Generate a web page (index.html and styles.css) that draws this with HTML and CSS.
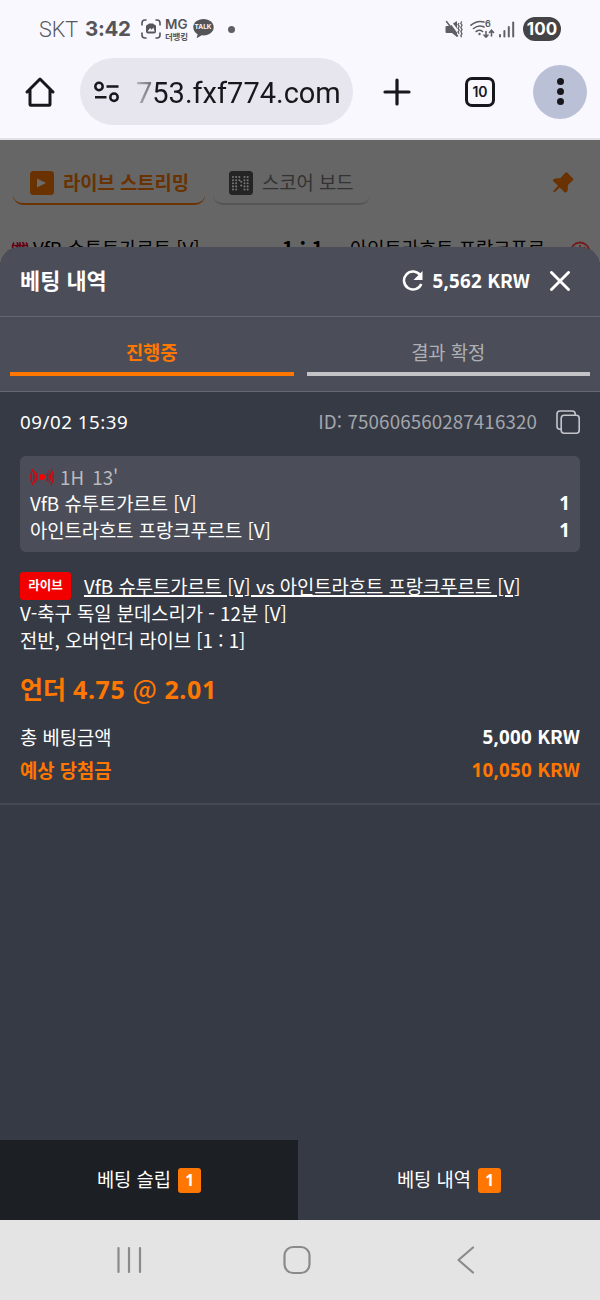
FILE: index.html
```html
<!DOCTYPE html>
<html lang="ko">
<head>
<meta charset="utf-8">
<title>베팅 내역</title>
<link rel="stylesheet" href="styles.css">
</head>
<body>
<div class="screen">
  <header class="browser">
    <div class="status">
      <span class="carrier">SKT</span>
      <span class="clock">3:42</span>
      <svg class="capture" width="20" height="20" viewBox="0 0 20 20" fill="none" stroke="#555558" stroke-width="1.6" stroke-linecap="round"><path d="M1 6V4a3 3 0 0 1 3-3h1M15 1h1a3 3 0 0 1 3 3v2M19 14v2a3 3 0 0 1-3 3h-1M5 19H4a3 3 0 0 1-3-3v-2"/><path d="M5 7.500q0-2 2-2l1-1h4l1 1q2 0 2 2v5q0 2-2 2H7q-2 0-2-2z" fill="#555558" stroke="none"/><path d="M6.500 12.500l2.600-3.400 1.600 1.600 1.600-2.200 1.400 4z" fill="#f9f8ff" stroke="none"/></svg>
      <span class="mg"><b>MG</b><small>더뱅킹</small></span>
      <span class="talk"><svg width="21" height="20" viewBox="0 0 21 20"><path fill="#555558" d="M10.500 0C4.600 0 .3 3.600.3 8.200c0 3 1.700 5.500 4.300 7L3.700 19.300l5-3c.6.1 1.200.1 1.800.1 5.900 0 10.200-3.600 10.200-8.200S16.400 0 10.500 0z"/></svg><i>TALK</i></span>
      <span class="more-dot"></span>
      <span class="spacer"></span>
      <svg class="mute" width="18" height="18" viewBox="0 0 18 18"><path fill="#5e5e63" d="M.5 7q0-1 1-1H5l1.500-1 5.500 7.500V17l-5-4H1.500q-1 0-1-1zM8 3.500L12 1v7.500z"/><path d="M1.500 1.500L12.500 16" stroke="#5e5e63" stroke-width="1.500" stroke-linecap="round"/><path d="M14 3l-1 1.500 1.200 1.800L13 8.200l1.200 1.900L13 12l1.200 1.800M16.800 1.500l-1 1.800 1.200 2-1.200 2.100 1.200 2.100-1.200 2.100 1.200 2.100-1.200 2 .8 1.500" fill="none" stroke="#5e5e63" stroke-width="1.300"/></svg>
      <span class="wifi"><svg width="25" height="18" viewBox="0 0 25 18" fill="none" stroke="#5e5e63" stroke-width="1.600" stroke-linecap="round"><path d="M1 5.200Q7 0 14 2M3.500 8.500Q8.500 4.500 14 7M6.200 11.500Q9.500 9 12.600 11.500"/><circle cx="9.500" cy="14" r="1.200" fill="#5e5e63" stroke="none"/><path d="M16 11.500V17M14 15l2 2.200L18 15M21.500 16v-5.500M19.500 12.500l2-2.200 2 2.200"/></svg><i>6</i></span>
      <svg class="signal" width="16" height="17" viewBox="0 0 16 17" fill="#626266"><rect x="0" y="13" width="2" height="3.500" rx="1"/><rect x="4.400" y="9" width="2" height="7.500" rx="1"/><rect x="8.800" y="5" width="2" height="11.500" rx="1"/><rect x="13.200" y="0.500" width="2" height="16" rx="1"/></svg>
      <span class="battery">100</span>
    </div>
    <div class="toolbar">
      <svg class="home" width="32" height="32" viewBox="0 0 32 32" fill="none" stroke="#17171c" stroke-width="3" stroke-linejoin="round" stroke-linecap="round"><path d="M3 16L16 3l13 13M6 14v14.500q0 .8.800.8h18.400q.8 0 .8-.8V14"/></svg>
      <div class="address">
        <svg width="26" height="22" viewBox="0 0 26 22" fill="none" stroke="#17171c" stroke-width="2.500"><circle cx="6" cy="5.500" r="3.700"/><path d="M13.500 5.500h12M2 16.200h11.500"/><circle cx="21" cy="16.200" r="3.700"/></svg>
        <span class="url">753.fxf774.com</span>
      </div>
      <svg class="plus" width="28" height="28" viewBox="0 0 28 28" stroke="#17171c" stroke-width="3.200" stroke-linecap="round"><path d="M14 2v24M2 14h24"/></svg>
      <span class="tabcount">10</span>
      <span class="menu"><i></i><i></i><i></i></span>
    </div>
  </header>

  <section class="page">
    <div class="modes">
      <div class="mode on">
        <svg width="24" height="24" viewBox="0 0 24 24"><rect width="24" height="24" rx="3.500" fill="#693200"/><path d="M7 7.500l9 4.500-9 4.500z" fill="#6b6b6b"/></svg>
        <span>라이브 스트리밍</span>
      </div>
      <div class="mode">
        <svg width="24" height="24" viewBox="0 0 24 24"><rect width="24" height="24" rx="3.500" fill="#242424"/><g stroke="#747474" stroke-width="2.100" stroke-linecap="round" stroke-dasharray="0 3.170"><path d="M4 6h7M15.500 6H21M4 9.200h7M15.500 9.200H21M4 12.300h5M12.200 10.800h.1M15.500 12.300H21M4 15.400h5M12.200 14.500h.1M15.500 15.400H21M4 18.500h5M15.500 18.500H21"/></g></svg>
        <span>스코어 보드</span>
      </div>
      <svg class="pin" width="22" height="22" viewBox="0 0 22 22"><path fill="#693200" d="M13.500.5q1-.7 1.900.2l5.500 5.700q.8.900 0 1.900l-5 4.600-.2 5q-.1 1.500-1.400 2.300-1 .7-1.900-.2l-4.600-4.500-5 4.600H1.500v-1.300l4.600-5L1.300 9.300q-.8-.9 0-1.700 1-.9 2.400-1l4.800-.6z"/></svg>
    </div>
    <div class="match">
      <svg class="badge" width="18" height="16" viewBox="0 0 18 16"><path d="M3 1.500Q0 5 3 10M15 1.500q3 3.500 0 8.500M5.500 1.500q3 1 0 3.500 3 2 0 4M11 1.500q3.500 1 .5 3.500 3 2 0 4M9 1v7M1 4.500h16" fill="none" stroke="#650014" stroke-width="1.600"/></svg>
      <span class="home-team">VfB 슈투트가르트 [V]</span>
      <span class="score">1 : 1</span>
      <span class="away-team">아인트라흐트 프랑크푸르</span>
      <svg class="timer" width="22" height="22" viewBox="0 0 22 22" fill="none" stroke="#751c1c" stroke-width="1.800"><circle cx="11" cy="11" r="9.500"/><path d="M11 4v7M7 6l-2 3M15 6l2 3"/></svg>
    </div>
  </section>

  <main class="sheet">
    <div class="sheet-head">
      <h1>베팅 내역</h1>
      <svg class="refresh" width="22" height="22" viewBox="0 0 22 22"><path d="M18.300 5.200A9 9 0 1 0 19.300 14" fill="none" stroke="#fff" stroke-width="2.500"/><path d="M20.500 1v9h-9z" fill="#fff"/></svg>
      <span class="balance amount">5,562 <span>KRW</span></span>
      <svg class="close" width="20" height="20" viewBox="0 0 20 20" stroke="#fff" stroke-width="2.900" stroke-linecap="round"><path d="M1.500 1.500l17 17M18.500 1.500l-17 17"/></svg>
    </div>
    <nav class="tabs">
      <div class="tab on">진행중</div>
      <div class="tab">결과 확정</div>
    </nav>
    <article class="bet">
      <div class="meta">
        <time>09/02 15:39</time>
        <span class="bet-id">ID: 750606560287416320</span>
        <svg class="copy" width="24" height="24" viewBox="0 0 24 24" fill="none" stroke="#c5c6ca" stroke-width="1.600"><path d="M5 19.200H4Q1 19.200 1 16.200V4q0-3 3-3h12.200q3 0 3 3v1"/><rect x="5.200" y="5.200" width="18" height="18" rx="3"/></svg>
      </div>
      <div class="card">
        <div class="period"><svg width="24" height="18" viewBox="0 0 24 18" fill="none" stroke="#d0000a" stroke-width="1.300"><circle cx="12" cy="9" r="3" fill="#ff0000" stroke="none"/><path d="M3 1Q-1.500 9 3 17M5.200 3Q2 9 5.200 15M7.200 5Q5 9 7.200 13M21 1q4.500 8 0 16M18.800 3q3.200 6 0 12M16.800 5q2.200 4 0 8"/></svg><span>1H 13'</span></div>
        <div class="team"><span>VfB 슈투트가르트 [V]</span><b>1</b></div>
        <div class="team"><span>아인트라흐트 프랑크푸르트 [V]</span><b>1</b></div>
      </div>
      <div class="fixture"><span class="live">라이브</span><a>VfB 슈투트가르트 [V] vs 아인트라흐트 프랑크푸르트 [V]</a></div>
      <div class="line">V-축구 독일 분데스리가 - 12분 [V]</div>
      <div class="line">전반, 오버언더 라이브 [1 : 1]</div>
      <div class="pick">언더 <span class="latin">4.75 <span class="at">@</span> 2.01</span></div>
      <div class="sum stake"><span>총 베팅금액</span><b class="amount">5,000 <span>KRW</span></b></div>
      <div class="sum payout"><span>예상 당첨금</span><b class="amount">10,050 <span>KRW</span></b></div>
    </article>
  </main>

  <nav class="dock">
    <div class="dock-item slip"><span>베팅 슬립</span><b>1</b></div>
    <div class="dock-item"><span>베팅 내역</span><b>1</b></div>
  </nav>

  <footer class="system">
    <svg width="28" height="28" viewBox="0 0 28 28" stroke="#8a8a8a" stroke-width="2.200" stroke-linecap="round"><path d="M3.500 2v24M14 2v24M25 2v24"/></svg>
    <svg class="sys-home" width="28" height="32" viewBox="0 0 28 32" fill="none" stroke="#8a8a8a" stroke-width="2.200"><rect x="1.500" y="3" width="25" height="26" rx="8.500"/></svg>
    <svg class="sys-back" width="18" height="30" viewBox="0 0 18 30" fill="none" stroke="#8a8a8a" stroke-width="2.200" stroke-linecap="round" stroke-linejoin="round"><path d="M16 2.500L1.500 15 16 27.500"/></svg>
  </footer>
</div>
</body>
</html>
```
FILE: styles.css
```css
* { box-sizing: border-box; }
body { margin: 0; background: #363a45; font-family: "Noto Sans CJK KR", sans-serif; font-size: 18.75px; }
svg { display: block; flex: none; }
i { font-style: normal; }
.screen { width: 600px; height: 1300px; display: flex; flex-direction: column; overflow: hidden; }
.screen > * { flex: none; }

.browser { height: 140px; background: #f9f8ff; border-bottom: 2px solid #e2e1e7; }
.status { height: 58px; display: flex; align-items: center; padding: 0 39px; color: #555558; font-family: Inter, sans-serif; }
.carrier { width: 46px; font: 300 21.500px Roboto, sans-serif; color: #58585c; }
.clock { width: 56px; padding-bottom: 1px; font-size: 20.500px; font-weight: 700; letter-spacing: -.3px; }
.mg { margin-left: 4px; width: 24px; display: flex; flex-direction: column; }
.mg b { font: 600 13.500px/13px Inter, sans-serif; }
.mg small { font: 700 8.500px/10px "Noto Sans CJK KR", sans-serif; letter-spacing: -.2px; white-space: nowrap; }
.talk { position: relative; margin-left: 3.500px; }
.talk i { position: absolute; left: 0; right: 0; top: 4px; text-align: center; color: #f9f8ff; font-size: 6.500px; line-height: 9px; font-weight: 700; }
.more-dot { width: 7px; height: 7px; border-radius: 50%; background: #606064; margin-left: 14px; }
.spacer { flex: 1; }
.mute { margin-bottom: 1px; }
.wifi { position: relative; margin-left: 7px; }
.wifi i { position: absolute; left: 15px; top: -1px; font-size: 9px; line-height: 10px; font-weight: 600; }
.signal { margin-left: 4px; }
.battery { width: 38px; height: 24px; border-radius: 12px; margin-left: 8px; background: #444447; color: #fff; font-size: 17px; font-weight: 700; line-height: 24px; text-align: center; }
.toolbar { height: 67px; display: flex; align-items: center; padding: 0 13px 0 24px; }
.address { width: 273px; height: 67px; margin-left: 24px; border-radius: 34px; background: #e7e6ee; display: flex; align-items: center; padding-left: 13px; }
.url { margin-left: 17px; padding-top: 2px; font: 400 29px Roboto, sans-serif; background: linear-gradient(90deg, #b5b5bb 0, #77777d 14px, #17171c 18px); -webkit-background-clip: text; background-clip: text; color: transparent; }
.plus { margin-left: 30px; }
.tabcount { margin-left: 54px; width: 30px; height: 30px; border: 3px solid #17171c; border-radius: 7px; font: 600 14px/24px Inter, sans-serif; text-align: center; color: #17171c; }
.menu { margin-left: auto; width: 54px; height: 54px; border-radius: 50%; background: #bac1d6; display: flex; flex-direction: column; align-items: center; justify-content: center; gap: 3px; }
.menu i { width: 7px; height: 7px; border-radius: 50%; background: #17171c; }

.page { height: 127px; margin-bottom: -20px; background: #666; padding-top: 22px; overflow: hidden; }
.modes { display: flex; height: 44px; padding-left: 13px; }
.mode { height: 43px; display: flex; align-items: center; padding: 0 16px 0 17px; border-bottom: 2px solid #555; border-radius: 10px; margin-right: 8px; color: #333; }
.mode span { margin-left: 9px; padding-bottom: 2px; white-space: nowrap; }
.mode.on { color: #693200; font-weight: 700; border-color: #693200; width: 192px; }
.mode:not(.on) { width: 157px; padding-left: 16px; }
.pin { margin: 10px 0 0 174px; }
.match { display: flex; align-items: flex-start; padding: 29px 9px 0 11px; line-height: 26px; color: #000; white-space: nowrap; }
.badge { margin-top: 6px; }
.home-team { margin-left: 4px; width: 249px; }
.score { width: 68px; font-weight: 700; font-size: 20px; }
.timer { margin: 6px 0 0 auto; }

.sheet { position: relative; height: 893px; background: #363a45; border-radius: 20px 20px 0 0; color: #fff; }
.sheet-head { height: 70px; border-radius: 20px 20px 0 0; border-bottom: 1px solid #646771; background: #4b4e59; display: flex; align-items: center; padding: 0 30px 2px 20px; }
h1 { margin: 0 auto 0 0; padding-bottom: 2px; font-size: 21.900px; line-height: 30px; font-weight: 700; }
.amount { font-weight: 700; font-family: "Noto Sans", sans-serif; letter-spacing: .25px; }
.amount span { font-family: "Noto Sans CJK KR", sans-serif; letter-spacing: 0; }
.balance { margin: 0 20px 0 9px; padding-bottom: 2px; }
.tabs { height: 75px; background: #4b4e59; border-bottom: 1px solid #646771; display: flex; gap: 13px; padding: 13px 10px 0; }
.tab { flex: 1; height: 46px; border-bottom: 4px solid #c4c4c7; color: #afb0b5; text-align: center; line-height: 43px; }
.tab.on { color: #ff7700; border-color: #ff7700; font-weight: 700; }
.bet { height: 413px; border-bottom: 2px solid #454954; padding: 12px 20px 0; }
.meta { height: 36px; display: flex; align-items: center; }
time { margin-right: auto; padding-bottom: 2px; font-family: "Noto Sans", sans-serif; letter-spacing: .5px; }
.bet-id { color: #a4a6ab; margin-right: 19px; padding-bottom: 3px; letter-spacing: .12px; }
.card { margin-top: 16px; height: 96px; border-radius: 6px; background: #4b4e59; padding: 7.600px 10px 0; line-height: 26.600px; }
.period { display: flex; align-items: center; color: #b9bac0; }
.period span { margin-left: 6px; word-spacing: 3px; }
.team { display: flex; justify-content: space-between; }
.team b { font-family: "Noto Sans", sans-serif; }
.fixture { margin-top: 20px; height: 28px; display: flex; align-items: center; white-space: nowrap; }
.live { width: 51px; height: 28px; border-radius: 3px; background: #f20000; font-size: 12.500px; font-weight: 700; line-height: 26px; text-align: center; margin-right: 13px; }
.fixture a { padding-bottom: 2px; text-decoration: underline; text-decoration-thickness: 1.500px; }
.line { line-height: 26.600px; }
.pick { margin-top: 18px; height: 34px; line-height: 34px; color: #ff7700; font-size: 25px; font-weight: 700; }
.latin { font-family: "Noto Sans", sans-serif; letter-spacing: .6px; }
.at { font-family: "Noto Sans CJK KR", sans-serif; font-weight: 500; }
.sum { height: 33px; display: flex; justify-content: space-between; line-height: 33px; }
.sum b { margin-top: -1px; }
.stake { margin-top: 15px; }
.payout { color: #ff7700; font-weight: 700; }

.dock { height: 80px; display: flex; color: #fff; }
.dock-item { flex: 1; display: flex; align-items: center; justify-content: center; gap: 7px; }
.dock-item span { padding-bottom: 3px; }
.slip { flex: 0 0 298px; background: #1c1f24; }
.dock b { width: 23px; height: 25px; border-radius: 3px; background: #ff7700; font: 700 15.600px/24px "Noto Sans", sans-serif; text-align: center; }
.system { height: 80px; background: #e4e4e4; display: flex; align-items: center; padding-left: 115px; }
.sys-home { margin-left: 140px; }
.sys-back { margin-left: 146px; }
```
